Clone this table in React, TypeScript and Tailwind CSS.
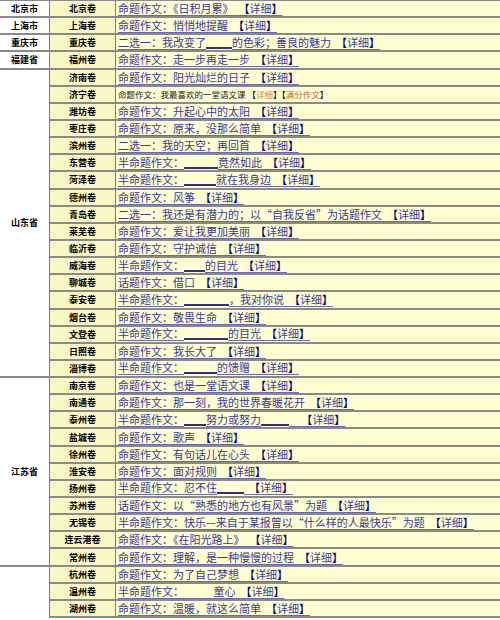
import React from "react";

type Part = string | { blank: string; plain?: boolean };

interface Row {
  prov?: { name: string; span: string; last?: boolean };
  juan: string;
  parts: Part[];
  special?: boolean;
}

const rows: Row[] = [
  { prov: { name: "北京市", span: "row-span-1" }, juan: "北京卷", parts: ["命题作文：《日积月累》"] },
  { prov: { name: "上海市", span: "row-span-1" }, juan: "上海卷", parts: ["命题作文：悄悄地提醒"] },
  { prov: { name: "重庆市", span: "row-span-1" }, juan: "重庆卷", parts: ["二选一：我改变了", { blank: "w-[26px]" }, "的色彩；善良的魅力"] },
  { prov: { name: "福建省", span: "row-span-1" }, juan: "福州卷", parts: ["命题作文：走一步再走一步"] },
  { prov: { name: "山东省", span: "row-span-[18]" }, juan: "济南卷", parts: ["命题作文：阳光灿烂的日子"] },
  { juan: "济宁卷", parts: [], special: true },
  { juan: "潍坊卷", parts: ["命题作文：升起心中的太阳"] },
  { juan: "枣庄卷", parts: ["命题作文：原来，没那么简单"] },
  { juan: "滨州卷", parts: ["二选一：我的天空；再回首"] },
  { juan: "东营卷", parts: ["半命题作文：", { blank: "w-[34px]" }, "竟然如此"] },
  { juan: "菏泽卷", parts: ["半命题作文：", { blank: "w-[32px]" }, "就在我身边"] },
  { juan: "德州卷", parts: ["命题作文：风筝"] },
  { juan: "青岛卷", parts: ["二选一：我还是有潜力的；以“自我反省”为话题作文"] },
  { juan: "莱芜卷", parts: ["命题作文：爱让我更加美丽"] },
  { juan: "临沂卷", parts: ["命题作文：守护诚信"] },
  { juan: "威海卷", parts: ["半命题作文：", { blank: "w-[21px]" }, "的目光"] },
  { juan: "聊城卷", parts: ["话题作文：借口"] },
  { juan: "泰安卷", parts: ["半命题作文：", { blank: "w-[45px]" }, "，我对你说"] },
  { juan: "烟台卷", parts: ["命题作文：敬畏生命"] },
  { juan: "文登卷", parts: ["半命题作文：", { blank: "w-[44px]" }, "的目光"] },
  { juan: "日照卷", parts: ["命题作文：我长大了"] },
  { juan: "淄博卷", parts: ["半命题作文：", { blank: "w-[33px]" }, "的馈赠"] },
  { prov: { name: "江苏省", span: "row-span-[11]" }, juan: "南京卷", parts: ["命题作文：也是一堂语文课"] },
  { juan: "南通卷", parts: ["命题作文：那一刻，我的世界春暖花开"] },
  { juan: "泰州卷", parts: ["半命题作文：", { blank: "w-[22px]" }, "努力或努力", { blank: "w-[28px]" }, "\u00a0\u00a0\u00a0"] },
  { juan: "盐城卷", parts: ["命题作文：歌声"] },
  { juan: "徐州卷", parts: ["命题作文：有句话儿在心头"] },
  { juan: "淮安卷", parts: ["命题作文：面对规则"] },
  { juan: "扬州卷", parts: ["半命题作文：忍不住", { blank: "w-[27px]" }] },
  { juan: "苏州卷", parts: ["话题作文：以“熟悉的地方也有风景”为题"] },
  { juan: "无锡卷", parts: ["半命题作文：快乐—来自于某报曾以“什么样的人最快乐”为题"] },
  { juan: "连云港卷", parts: ["命题作文：《在阳光路上》"] },
  { juan: "常州卷", parts: ["命题作文：理解，是一种慢慢的过程"] },
  { prov: { name: "", span: "row-span-3", last: true }, juan: "杭州卷", parts: ["命题作文：为了自己梦想"] },
  { juan: "温州卷", parts: ["半命题作文：", { blank: "w-[30px]", plain: true }, "童心"] },
  { juan: "湖州卷", parts: ["命题作文：温暖，就这么简单"] },
];

function Content({ row }: { row: Row }) {
  if (row.special) {
    return (
      <span className="text-[8.5px] text-[#222]">
        命题作文：我最喜欢的一堂语文课{"\u00a0"}
        <span className="font-bold text-[#222]">【</span>
        <span className="text-[#cf8a45]">详细</span>
        <span className="font-bold text-[#222]">】</span>
        <span className="font-bold text-[#222]">【</span>
        <span className="text-[#c8661c]">满分作文</span>
        <span className="font-bold text-[#222]">】</span>
      </span>
    );
  }
  return (
    <span className="text-[11px] text-[#3a3a9e] underline decoration-[#6a6aa8] underline-offset-[2px]">
      {row.parts.map((p, i) =>
        typeof p === "string" ? (
          <React.Fragment key={i}>{p}</React.Fragment>
        ) : p.plain ? (
          <React.Fragment key={i}>{"\u00a0".repeat(12)}</React.Fragment>
        ) : (
          <span key={i} className={`inline-block h-0 ${p.blank} border-b-2 border-[#2e2e8c] align-[-2px]`} />
        )
      )}
      {"\u00a0\u00a0"}
      <span className="font-bold text-[#0b0b78]">【</span>详细<span className="font-bold text-[#0b0b78]">】</span>
    </span>
  );
}

export default function App() {
  const cells: React.ReactNode[] = [];
  rows.forEach((row, i) => {
    if (row.prov) {
      cells.push(
        <div
          key={`p${i}`}
          className={`col-start-1 ${row.prov.span} flex items-center justify-center bg-white border-r border-r-[#7c7c7c] ${row.prov.last ? "" : "border-b-2 border-b-[#8a8a8a]"} text-[9px] font-bold leading-none text-black`}
        >
          {row.prov.name}
        </div>
      );
    }
    cells.push(
      <div
        key={`j${i}`}
        className="col-start-2 flex items-center justify-center bg-[#fbf6c3] border-r border-r-[#7c7c7c] border-b-2 border-b-[#8a8a8a] text-[9px] font-bold leading-none text-black"
      >
        {row.juan}
      </div>
    );
    cells.push(
      <div
        key={`c${i}`}
        className="col-start-3 flex items-center pl-[2px] bg-[#fffdd2] border-b-2 border-b-[#8a8a8a] whitespace-nowrap overflow-hidden leading-none"
      >
        <Content row={row} />
      </div>
    );
  });
  return (
    <div className="w-[500px] h-[620px] overflow-hidden bg-white font-['Noto_Sans_CJK_SC',sans-serif]">
      <div className="grid h-[618px] grid-cols-[50px_66px_1fr] grid-rows-[repeat(36,minmax(0,1fr))] border-t border-t-[#8a8a8a]">
        {cells}
      </div>
    </div>
  );
}
